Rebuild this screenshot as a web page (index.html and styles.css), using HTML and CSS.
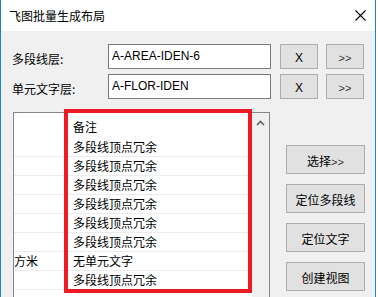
FILE: index.html
```html
<!DOCTYPE html>
<html lang="zh-cn">
<head>
    <meta charset="UTF-8">
    <title>飞图批量生成布局</title>
    <link rel="stylesheet" href="styles.css">
</head>
<body>
    <div class="window">
        <div class="titlebar">
            <span class="title">飞图批量生成布局</span>
            <svg class="close" width="11" height="11" viewBox="0 0 11 11">
                <path d="M0.5 0.5 L10.5 10.5 M10.5 0.5 L0.5 10.5" stroke="#000" stroke-width="1.1" fill="none"/>
            </svg>
        </div>

        <div class="content">
            <div class="field-row">
                <span class="field-label">多段线层:</span>
                <div class="field-input">A-AREA-IDEN-6</div>
                <button class="btn-small">X</button>
                <button class="btn-small btn-more">&gt;&gt;</button>
            </div>

            <div class="field-row second">
                <span class="field-label">单元文字层:</span>
                <div class="field-input">A-FLOR-IDEN</div>
                <button class="btn-small">X</button>
                <button class="btn-small btn-more">&gt;&gt;</button>
            </div>

            <div class="lower">
                <div class="list">
                    <div class="list-rows">
                        <div class="list-row head"><span class="col-a"></span><span class="col-b">备注</span></div>
                        <div class="list-row"><span class="col-a"></span><span class="col-b">多段线顶点冗余</span></div>
                        <div class="list-row"><span class="col-a"></span><span class="col-b">多段线顶点冗余</span></div>
                        <div class="list-row"><span class="col-a"></span><span class="col-b">多段线顶点冗余</span></div>
                        <div class="list-row"><span class="col-a"></span><span class="col-b">多段线顶点冗余</span></div>
                        <div class="list-row"><span class="col-a"></span><span class="col-b">多段线顶点冗余</span></div>
                        <div class="list-row"><span class="col-a"></span><span class="col-b">多段线顶点冗余</span></div>
                        <div class="list-row"><span class="col-a">方米</span><span class="col-b">无单元文字</span></div>
                        <div class="list-row"><span class="col-a"></span><span class="col-b">多段线顶点冗余</span></div>
                    </div>
                    <div class="scrollbar">
                        <svg class="scroll-up" width="9" height="6" viewBox="0 0 9 6">
                            <path d="M1 5 L4.5 1.5 L8 5" stroke="#606060" stroke-width="1.6" fill="none"/>
                        </svg>
                    </div>
                </div>

                <div class="side-buttons">
                    <button class="btn-side">选择<span class="arrows">&gt;&gt;</span></button>
                    <button class="btn-side">定位多段线</button>
                    <button class="btn-side">定位文字</button>
                    <button class="btn-side">创建视图</button>
                </div>
            </div>
        </div>

        <div class="highlight"></div>
    </div>
</body>
</html>
```

FILE: styles.css
```css
html, body {
    margin: 0;
    padding: 0;
    background-color: #ffffff;
}

.window {
    position: relative;
    width: 376px;
    height: 297px;
    box-sizing: border-box;
    border-left: 1px solid #1883d7;
    border-right: 1px solid #1883d7;
    background-color: #f0f0f0;
    overflow: hidden;
    font-family: "Noto Sans CJK SC", "Microsoft YaHei", sans-serif;
    font-size: 12px;
    color: #000;
}

.titlebar {
    display: flex;
    align-items: center;
    justify-content: space-between;
    height: 31px;
    background-color: #ffffff;
    padding: 0 8px 0 8px;
}

.title {
    font-size: 12px;
    margin-top: -1px;
}

.close {
    margin-right: 1px;
    margin-top: -1px;
}

.content {
    padding: 13px 0 0 11px;
}

.field-row {
    display: flex;
    align-items: center;
    height: 25px;
}

.field-row.second {
    margin-top: 5px;
}

.field-label {
    width: 96px;
    padding-top: 3px;
}

.field-input {
    width: 163px;
    height: 25px;
    box-sizing: border-box;
    border: 1px solid #7a7a7a;
    background-color: #ffffff;
    padding: 0 3px;
    line-height: 23px;
    font-family: "Liberation Sans", Arial, sans-serif;
    font-size: 12px;
}

.btn-small {
    width: 38px;
    height: 25px;
    margin-left: 9px;
    padding: 0;
    border: 1px solid #adadad;
    background-color: #e1e1e1;
    font-family: "Liberation Sans", Arial, sans-serif;
    font-size: 12px;
    color: #000;
    padding-top: 2px;
}

.btn-more {
    margin-left: 8px;
    font-size: 11px;
    color: #333;
}

.lower {
    display: flex;
    align-items: flex-start;
    margin-top: 13px;
}

.list {
    display: flex;
    width: 257px;
    height: 200px;
    margin-left: 1px;
    box-sizing: border-box;
    border: 1px solid #828790;
    background-color: #ffffff;
}

.list-rows {
    width: 238px;
    overflow: hidden;
}

.list-row {
    display: flex;
    height: 19px;
    box-sizing: border-box;
    border-bottom: 1px solid #ececec;
    line-height: 16px;
    padding-top: 1px;
    white-space: nowrap;
}

.list-row.head {
    height: 25px;
    border-bottom: none;
    padding-top: 6px;
}

.col-a {
    width: 59px;
    overflow: hidden;
}

.col-b {
    flex: 1;
}

.scrollbar {
    width: 17px;
    background-color: #f0f0f0;
    display: flex;
    justify-content: center;
    padding-top: 7px;
    box-sizing: border-box;
}

.scroll-up {
    display: block;
}

.side-buttons {
    display: flex;
    flex-direction: column;
    gap: 10px;
    margin-left: 16px;
    margin-top: 33px;
}

.btn-side {
    width: 79px;
    height: 29px;
    padding: 1px 0 0 0;
    border: 1px solid #adadad;
    background-color: #e1e1e1;
    font-family: "Noto Sans CJK SC", "Microsoft YaHei", sans-serif;
    font-size: 12px;
    color: #000;
}

.arrows {
    font-family: "Liberation Sans", Arial, sans-serif;
    font-size: 11px;
    color: #333;
}

/* 红框标注 */
.highlight {
    position: absolute;
    left: 63px;
    top: 109px;
    width: 180px;
    height: 176px;
    border: 4px solid #ed1c24;
}
```
